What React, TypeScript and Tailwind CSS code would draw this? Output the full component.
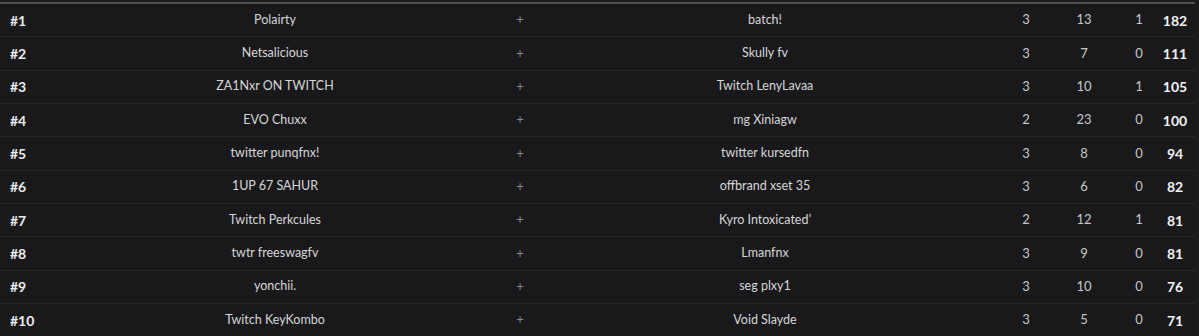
import React from "react";

const rows = [
  ["#1", "Polairty", "batch!", 3, 13, 1, 182],
  ["#2", "Netsalicious", "Skully fv", 3, 7, 0, 111],
  ["#3", "ZA1Nxr ON TWITCH", "Twitch LenyLavaa", 3, 10, 1, 105],
  ["#4", "EVO Chuxx", "mg Xiniagw", 2, 23, 0, 100],
  ["#5", "twitter punqfnx!", "twitter kursedfn", 3, 8, 0, 94],
  ["#6", "1UP 67 SAHUR", "offbrand xset 35", 3, 6, 0, 82],
  ["#7", "Twitch Perkcules", "Kyro Intoxicated\u02bc", 2, 12, 1, 81],
  ["#8", "twtr freeswagfv", "Lmanfnx", 3, 9, 0, 81],
  ["#9", "yonchii.", "seg plxy1", 3, 10, 0, 76],
  ["#10", "Twitch KeyKombo", "Void Slayde", 3, 5, 0, 71],
];

export default function App() {
  return (
    <div
      className="w-[1199px] h-[336px] overflow-hidden bg-[#1c1c1f] pt-[2px]"
      style={{ fontFamily: "Lato, 'Noto Sans', sans-serif" }}
    >
      <div className="w-[1195px] border-t-2 border-[#505053] bg-[#19191c]">
        {rows.map((r) => (
          <div
            key={r[0] as string}
            className="grid grid-cols-[60px_430px_60px_430px_92px_24px_69px_20px_1fr] items-center h-[33.33px] border-b border-[#28282b] text-[12.5px]"
          >
            <div className="pl-[10px] font-bold text-[#ececec] text-[14px]">{r[0]}</div>
            <div className="text-center text-[#d6d6d6] whitespace-nowrap">{r[1]}</div>
            <div className="text-center text-[#8a8a8c] text-[13px]">+</div>
            <div className="text-center text-[#d6d6d6] whitespace-nowrap">{r[2]}</div>
            <div className="text-center text-[#c8c8c8] text-[13px]">{r[3]}</div>
            <div className="flex justify-center text-[#c8c8c8] text-[13px]">{r[4]}</div>
            <div className="pl-[17px] text-center text-[#c8c8c8] text-[13px]">{r[5]}</div>
            <div className="flex justify-center font-bold text-[#f2f2f2] text-[14px]">{r[6]}</div>
            <div />
          </div>
        ))}
      </div>
    </div>
  );
}
